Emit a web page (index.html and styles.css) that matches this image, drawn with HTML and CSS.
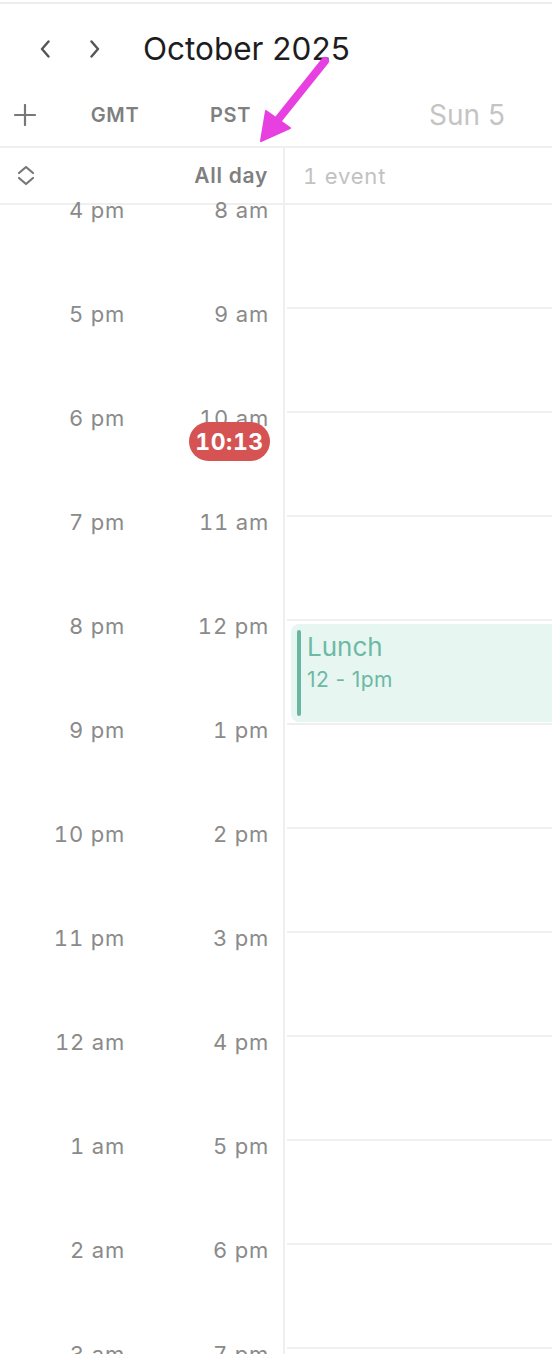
FILE: index.html
```html
<!DOCTYPE html>
<html lang="en">
<head>
    <meta charset="UTF-8">
    <meta name="viewport" content="width=device-width, initial-scale=1.0">
    <title>October 2025</title>
    <link rel="stylesheet" href="styles.css">
</head>
<body>
    <div class="calendar">
        <header class="month-bar">
            <button class="nav-btn" aria-label="Previous">
                <svg width="10" height="18" viewBox="0 0 10 18"><path d="M8.5 1.5 L2 9 L8.5 16.5" fill="none" stroke="#555" stroke-width="2.4" stroke-linecap="round" stroke-linejoin="round"/></svg>
            </button>
            <button class="nav-btn" aria-label="Next">
                <svg width="10" height="18" viewBox="0 0 10 18"><path d="M1.5 1.5 L8 9 L1.5 16.5" fill="none" stroke="#555" stroke-width="2.4" stroke-linecap="round" stroke-linejoin="round"/></svg>
            </button>
            <h1 class="month-title">October 2025</h1>
        </header>

        <div class="zone-bar">
            <button class="add-zone" aria-label="Add time zone">
                <svg width="22" height="22" viewBox="0 0 22 22"><path d="M11 1 V21 M1 11 H21" stroke="#777" stroke-width="2.2" stroke-linecap="round"/></svg>
            </button>
            <span class="zone zone-gmt">GMT</span>
            <span class="zone zone-pst">PST</span>
            <span class="day-name">Sun 5</span>
        </div>

        <div class="allday-row">
            <div class="allday-gutter">
                <svg class="expand-icon" width="18" height="21" viewBox="0 0 18 21"><path d="M2 8 L9 2 L16 8 M2 13 L9 19 L16 13" fill="none" stroke="#777" stroke-width="2.2" stroke-linecap="round" stroke-linejoin="round"/></svg>
                <span class="allday-label">All day</span>
            </div>
            <div class="allday-cell">1 event</div>
        </div>

        <div class="time-grid">
            <div class="hour-row">
                <div class="hour-gutter"><span class="gmt">4 pm</span><span class="pst">8 am</span></div>
                <div class="hour-cell"></div>
            </div>
            <div class="hour-row">
                <div class="hour-gutter"><span class="gmt">5 pm</span><span class="pst">9 am</span></div>
                <div class="hour-cell"></div>
            </div>
            <div class="hour-row">
                <div class="hour-gutter">
                    <span class="gmt">6 pm</span><span class="pst">10 am</span>
                    <span class="now-badge">10:13</span>
                </div>
                <div class="hour-cell"></div>
            </div>
            <div class="hour-row">
                <div class="hour-gutter"><span class="gmt">7 pm</span><span class="pst">11 am</span></div>
                <div class="hour-cell"></div>
            </div>
            <div class="hour-row">
                <div class="hour-gutter"><span class="gmt">8 pm</span><span class="pst">12 pm</span></div>
                <div class="hour-cell has-event">
                    <div class="event">
                        <div class="event-bar"></div>
                        <div class="event-text">
                            <div class="event-title">Lunch</div>
                            <div class="event-time">12 - 1pm</div>
                        </div>
                    </div>
                </div>
            </div>
            <div class="hour-row">
                <div class="hour-gutter"><span class="gmt">9 pm</span><span class="pst">1 pm</span></div>
                <div class="hour-cell"></div>
            </div>
            <div class="hour-row">
                <div class="hour-gutter"><span class="gmt">10 pm</span><span class="pst">2 pm</span></div>
                <div class="hour-cell"></div>
            </div>
            <div class="hour-row">
                <div class="hour-gutter"><span class="gmt">11 pm</span><span class="pst">3 pm</span></div>
                <div class="hour-cell"></div>
            </div>
            <div class="hour-row">
                <div class="hour-gutter"><span class="gmt">12 am</span><span class="pst">4 pm</span></div>
                <div class="hour-cell"></div>
            </div>
            <div class="hour-row">
                <div class="hour-gutter"><span class="gmt">1 am</span><span class="pst">5 pm</span></div>
                <div class="hour-cell"></div>
            </div>
            <div class="hour-row">
                <div class="hour-gutter"><span class="gmt">2 am</span><span class="pst">6 pm</span></div>
                <div class="hour-cell"></div>
            </div>
            <div class="hour-row">
                <div class="hour-gutter"><span class="gmt">3 am</span><span class="pst">7 pm</span></div>
                <div class="hour-cell"></div>
            </div>
        </div>

        <!-- annotation arrow pointing at the All day label -->
        <svg class="annotation" width="552" height="160" viewBox="0 0 552 160">
            <line x1="325" y1="61" x2="277" y2="121" stroke="#e83fe0" stroke-width="8" stroke-linecap="round"/>
            <polygon points="261,141 266,111 290,128" fill="#e83fe0" stroke="#e83fe0" stroke-width="2" stroke-linejoin="round"/>
        </svg>
    </div>
</body>
</html>
```

FILE: styles.css
```css
* { margin: 0; padding: 0; box-sizing: border-box; }
body {
    font-family: Inter, "Liberation Sans", sans-serif;
    background-color: #ffffff;
    color: #1d1d1f;
    overflow: hidden;
}
button { background: none; border: none; cursor: pointer; }

.calendar {
    position: relative;
    height: 1354px;
    overflow: hidden;
    padding-top: 2px;
}

/* month header */
.month-bar {
    height: 91px;
    border-top: 2px solid #ececec;
    display: flex;
    align-items: center;
    padding-left: 36px;
    gap: 32px;
}
.nav-btn {
    width: 18px;
    height: 24px;
    display: flex;
    align-items: center;
    justify-content: center;
}
.month-title {
    font-size: 31.5px;
    font-weight: 400;
    margin-left: 7px;
    color: #1d1d1f;
}

/* time zones + day */
.zone-bar {
    height: 55px;
    padding-bottom: 9px;
    border-bottom: 2px solid #efefef;
    display: flex;
    align-items: center;
}
.add-zone {
    width: 50px;
    display: flex;
    justify-content: center;
}
.zone {
    font-size: 20px;
    font-weight: 600;
    color: #7f7f7f;
    text-align: center;
    letter-spacing: 0.6px;
}
.zone-gmt { width: 130px; }
.zone-pst { width: 101px; }
.day-name {
    margin-left: 148px;
    font-size: 28px;
    color: #c4c4c4;
}

/* all day row */
.allday-row {
    height: 57px;
    border-bottom: 2px solid #efefef;
    display: flex;
}
.allday-gutter {
    width: 285px;
    border-right: 2px solid #efefef;
    display: flex;
    align-items: center;
    justify-content: space-between;
    padding: 0 15px 0 17px;
}
.allday-label {
    font-size: 21px;
    font-weight: 600;
    letter-spacing: 0.7px;
    color: #7f7f7f;
}
.allday-cell {
    flex: 1;
    display: flex;
    align-items: center;
    padding-left: 18px;
    font-size: 22px;
    letter-spacing: 0.8px;
    font-feature-settings: "tnum";
    color: #c2c2c2;
}

/* hour grid */
.hour-row {
    display: flex;
    height: 104px;
}
.hour-gutter {
    position: relative;
    width: 285px;
    border-right: 2px solid #efefef;
    display: flex;
    align-items: flex-start;
}
.gmt, .pst {
    margin-top: -7px;
    line-height: 24px;
    font-size: 22px;
    letter-spacing: 0.8px;
    font-feature-settings: "tnum";
    color: #8a8a8a;
    text-align: right;
}
.gmt { width: 125px; }
.pst { width: 144px; }
.hour-cell {
    flex: 1;
    margin-left: 2px;
    border-bottom: 2px solid #efefef;
}
.has-event { padding: 3px 0 0 4px; }

.now-badge {
    position: absolute;
    left: 189px;
    top: 9px;
    width: 81px;
    height: 39px;
    border-radius: 20px;
    background-color: #d55353;
    color: #ffffff;
    font-size: 23px;
    font-weight: 700;
    letter-spacing: 0.6px;
    font-feature-settings: "tnum";
    display: flex;
    align-items: center;
    justify-content: center;
}

.event {
    height: 98px;
    background-color: #e8f6f2;
    border-radius: 8px 0 0 8px;
    display: flex;
    padding: 6px;
}
.event-bar {
    width: 4px;
    border-radius: 2px;
    background-color: #68b6a1;
}
.event-text {
    margin-left: 6px;
    padding-top: 2px;
    color: #6cb9a4;
}
.event-title { font-size: 26px; line-height: 30px; }
.event-time {
    font-size: 21px;
    line-height: 28px;
    margin-top: 4px;
    letter-spacing: 0.4px;
}

.annotation {
    position: absolute;
    top: 0;
    left: 0;
    pointer-events: none;
}
```
